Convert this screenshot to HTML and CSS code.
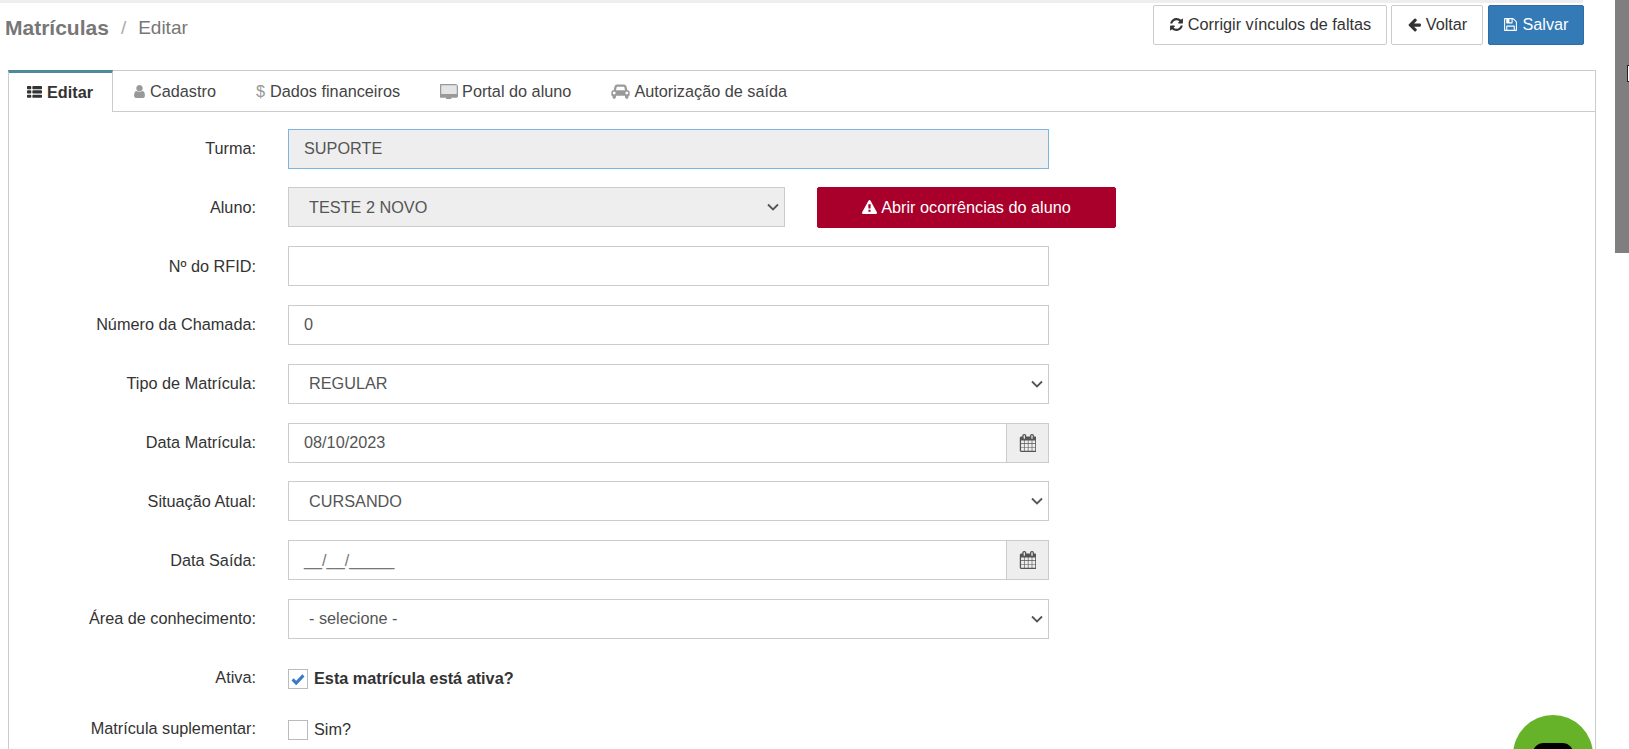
FILE: index.html
```html
<!DOCTYPE html>
<html lang="pt-BR">
<head>
<meta charset="utf-8">
<title>Matrículas / Editar</title>
<link rel="stylesheet" href="styles.css">
</head>
<body>
<svg class="defs" width="0" height="0" aria-hidden="true">
  <symbol id="i-cal" viewBox="0 0 1664 1792"><path d="M192 1664h288v-288h-288v288zm352 0h320v-288h-320v288zm-352-352h288v-320h-288v320zm352 0h320v-320h-320v320zm-352-384h288v-288h-288v288zm736 736h320v-288h-320v288zm-384-736h320v-288h-320v288zm768 736h288v-288h-288v288zm-384-352h320v-320h-320v320zm-352-864v-288q0-13-9.5-22.5t-22.5-9.5h-64q-13 0-22.5 9.5t-9.5 22.5v288q0 13 9.5 22.5t22.5 9.5h64q13 0 22.5-9.5t9.5-22.5zm736 864h288v-320h-288v320zm-384-384h320v-288h-320v288zm384 0h288v-288h-288v288zm32-480v-288q0-13-9.5-22.5t-22.5-9.5h-64q-13 0-22.5 9.5t-9.5 22.5v288q0 13 9.5 22.5t22.5 9.5h64q13 0 22.5-9.5t9.5-22.5zm384-64v1280q0 52-38 90t-90 38h-1408q-52 0-90-38t-38-90v-1280q0-52 38-90t90-38h128v-96q0-66 47-113t113-47h64q66 0 113 47t47 113v96h384v-96q0-66 47-113t113-47h64q66 0 113 47t47 113v96h128q52 0 90 38t38 90z"/></symbol>
</svg>

<div class="topstrip"></div>

<header class="pagehead">
  <h1 class="crumbs"><span class="crumb-main">Matrículas</span><span class="crumb-sep">/</span><span class="crumb-sub">Editar</span></h1>
  <div class="actions">
    <button class="btn btn-default btn-fix" type="button"><svg class="ic" viewBox="0 0 1792 1792"><path d="M1639 1056q0 5-1 7-64 268-268 434.5t-478 166.5q-146 0-282.5-55t-243.5-157l-129 129q-19 19-45 19t-45-19-19-45v-448q0-26 19-45t45-19h448q26 0 45 19t19 45-19 45l-137 137q71 66 161 102t187 36q134 0 250-65t186-179q11-17 53-117 8-23 30-23h192q13 0 22.5 9.5t9.5 22.5zm25-800v448q0 26-19 45t-45 19h-448q-26 0-45-19t-19-45 19-45l138-138q-148-137-349-137-134 0-250 65t-186 179q-11 17-53 117-8 23-30 23h-199q-13 0-22.5-9.5t-9.5-22.5v-7q65-268 270-434.5t480-166.5q146 0 284 55.5t245 156.5l130-129q19-19 45-19t45 19 19 45z"/></svg> Corrigir vínculos de faltas</button>
    <button class="btn btn-default btn-back" type="button"><svg class="ic" viewBox="0 0 1792 1792"><path d="M1664 896v128q0 53-32.5 90.5t-84.5 37.5h-704l293 294q38 36 38 90t-38 90l-75 76q-37 37-90 37-52 0-91-37l-651-652q-37-37-37-90 0-52 37-91l651-650q38-38 91-38 52 0 90 38l75 74q38 38 38 91t-38 91l-293 293h704q52 0 84.5 37.5t32.5 90.5z"/></svg> Voltar</button>
    <button class="btn btn-primary" type="button"><svg class="ic" viewBox="0 0 1792 1792"><path d="M512 1536h768v-384h-768v384zm896 0h128v-896q0-14-10-38.5t-20-34.5l-281-281q-10-10-34-20t-39-10v416q0 40-28 68t-68 28h-576q-40 0-68-28t-28-68v-416h-128v1280h128v-416q0-40 28-68t68-28h832q40 0 68 28t28 68v416zm-384-928v-320q0-13-9.5-22.5t-22.5-9.5h-192q-13 0-22.5 9.5t-9.5 22.5v320q0 13 9.5 22.5t22.5 9.5h192q13 0 22.5-9.5t9.5-22.5zm640 32v928q0 40-28 68t-68 28h-1344q-40 0-68-28t-28-68v-1344q0-40 28-68t68-28h928q40 0 88 20t76 48l280 280q28 28 48 76t20 88z"/></svg> Salvar</button>
  </div>
</header>

<main class="panel">
  <ul class="tabs">
    <li class="tab active"><svg class="ic" viewBox="0 0 1792 1792"><path d="M512 1248v192q0 40-28 68t-68 28h-320q-40 0-68-28t-28-68v-192q0-40 28-68t68-28h320q40 0 68 28t28 68zm0-512v192q0 40-28 68t-68 28h-320q-40 0-68-28t-28-68v-192q0-40 28-68t68-28h320q40 0 68 28t28 68zm1280 512v192q0 40-28 68t-68 28h-960q-40 0-68-28t-28-68v-192q0-40 28-68t68-28h960q40 0 68 28t28 68zm-1280-1024v192q0 40-28 68t-68 28h-320q-40 0-68-28t-28-68v-192q0-40 28-68t68-28h320q40 0 68 28t28 68zm1280 512v192q0 40-28 68t-68 28h-960q-40 0-68-28t-28-68v-192q0-40 28-68t68-28h960q40 0 68 28t28 68zm0-512v192q0 40-28 68t-68 28h-960q-40 0-68-28t-28-68v-192q0-40 28-68t68-28h960q40 0 68 28t28 68z"/></svg> Editar</li>
    <li class="tab"><svg class="ic ic-user" viewBox="256 128 1280 1536"><path d="M1536 1399q0 109-62.5 187t-150.5 78h-854q-88 0-150.5-78t-62.5-187q0-85 8.5-160.5t31.5-152 58.5-131 94-89 134.5-34.5q131 128 313 128t313-128q76 0 134.5 34.5t94 89 58.5 131 31.5 152 8.5 160.5zm-256-887q0 159-112.5 271.5t-271.5 112.5-271.5-112.5-112.5-271.5 112.5-271.5 271.5-112.5 271.5 112.5 112.5 271.5z"/></svg> Cadastro</li>
    <li class="tab"><span class="dollar">$</span> Dados financeiros</li>
    <li class="tab"><svg class="ic ic-desk" viewBox="0 0 1856 1536"><rect class="screen" x="100" y="100" width="1656" height="960"/><path d="M1728 992v-832q0-13-9.5-22.5t-22.5-9.5h-1536q-13 0-22.5 9.5t-9.5 22.5v832q0 13 9.5 22.5t22.5 9.5h1536q13 0 22.5-9.5t9.5-22.5zm128-832v1088q0 66-47 113t-113 47h-544q0 37 16 77.5t32 71 16 43.5q0 26-19 45t-45 19h-512q-26 0-45-19t-19-45q0-14 16-44t32-70 16-78h-544q-66 0-113-47t-47-113v-1088q0-66 47-113t113-47h1536q66 0 113 47t47 113z"/></svg> Portal do aluno</li>
    <li class="tab"><svg class="ic ic-car" viewBox="0 0 2048 1792"><path d="M480 1120q0-66-47-113t-113-47-113 47-47 113 47 113 113 47 113-47 47-113zm36-320h1016l-89-357q-2-8-14-17.5t-21-9.5h-768q-9 0-21 9.5t-14 17.5zm1372 320q0-66-47-113t-113-47-113 47-47 113 47 113 113 47 113-47 47-113zm160-96v384q0 14-9 23t-23 9h-96v128q0 80-56 136t-136 56-136-56-56-136v-128h-1024v128q0 80-56 136t-136 56-136-56-56-136v-128h-96q-14 0-23-9t-9-23v-384q0-93 65.5-158.5t158.5-65.5h28l105-419q23-94 104-157.5t179-63.5h768q98 0 179 63.5t104 157.5l105 419h28q93 0 158.5 65.5t65.5 158.5z"/></svg> Autorização de saída</li>
  </ul>

  <form class="form">
    <div class="row">
      <label class="lab">Turma:</label>
      <div class="ctl ctl-ro">SUPORTE</div>
    </div>
    <div class="row">
      <label class="lab">Aluno:</label>
      <div class="ctl ctl-sel ctl-ro-sel">TESTE 2 NOVO<svg class="chev" viewBox="0 0 12 8"><path d="M1 1.5l5 5 5-5" fill="none" stroke="#555" stroke-width="1.8"/></svg></div>
      <button class="btn btn-red" type="button"><svg class="ic" viewBox="0 0 1792 1792"><path d="M1024 1375v-190q0-14-9.5-23.5t-22.5-9.5h-192q-13 0-22.5 9.5t-9.5 23.5v190q0 14 9.5 23.5t22.5 9.5h192q13 0 22.5-9.5t9.5-23.5zm-2-374l18-459q0-12-10-19-13-11-24-11h-220q-11 0-24 11-10 7-10 21l17 457q0 10 10 16.5t24 6.5h185q14 0 23.5-6.5t10.5-16.5zm-14-934l768 1408q35 63-2 126-17 29-46.5 46t-63.5 17h-1536q-34 0-63.5-17t-46.5-46q-37-63-2-126l768-1408q17-31 47-49t65-18 65 18 47 49z"/></svg> Abrir ocorrências do aluno</button>
    </div>
    <div class="row">
      <label class="lab">Nº do RFID:</label>
      <div class="ctl"></div>
    </div>
    <div class="row">
      <label class="lab">Número da Chamada:</label>
      <div class="ctl">0</div>
    </div>
    <div class="row">
      <label class="lab">Tipo de Matrícula:</label>
      <div class="ctl ctl-sel">REGULAR<svg class="chev" viewBox="0 0 12 8"><path d="M1 1.5l5 5 5-5" fill="none" stroke="#555" stroke-width="1.8"/></svg></div>
    </div>
    <div class="row">
      <label class="lab">Data Matrícula:</label>
      <div class="group">
        <div class="ctl ctl-fill">08/10/2023</div>
        <div class="addon"><svg class="ic-cal"><use href="#i-cal"/></svg></div>
      </div>
    </div>
    <div class="row">
      <label class="lab">Situação Atual:</label>
      <div class="ctl ctl-sel">CURSANDO<svg class="chev" viewBox="0 0 12 8"><path d="M1 1.5l5 5 5-5" fill="none" stroke="#555" stroke-width="1.8"/></svg></div>
    </div>
    <div class="row">
      <label class="lab">Data Saída:</label>
      <div class="group">
        <div class="ctl ctl-fill ctl-mask">__/__/_____</div>
        <div class="addon"><svg class="ic-cal"><use href="#i-cal"/></svg></div>
      </div>
    </div>
    <div class="row">
      <label class="lab">Área de conhecimento:</label>
      <div class="ctl ctl-sel">- selecione -<svg class="chev" viewBox="0 0 12 8"><path d="M1 1.5l5 5 5-5" fill="none" stroke="#555" stroke-width="1.8"/></svg></div>
    </div>
    <div class="row row-check row-ativa">
      <label class="lab">Ativa:</label>
      <span class="box"><svg viewBox="0 0 20 20"><path d="M4 10.5l4 4 8-8.5" fill="none" stroke="#3a78c9" stroke-width="3.4"/></svg></span>
      <span class="check-text strong">Esta matrícula está ativa?</span>
    </div>
    <div class="row row-check">
      <label class="lab">Matrícula suplementar:</label>
      <span class="box"></span>
      <span class="check-text">Sim?</span>
    </div>
  </form>
</main>

<div class="scrollthumb"></div>
<div class="cursor"></div>
<div class="chat"><div class="chat-disc"><div class="chat-glyph"></div></div></div>
</body>
</html>
```
FILE: styles.css
```css
* { box-sizing: border-box; }
html, body { margin: 0; height: 749px; overflow: hidden; background: #fff; }
body { font-family: "Liberation Sans", Arial, sans-serif; font-size: 16.25px; color: #333; position: relative; }
.defs { position: absolute; }
.topstrip { height: 3px; width: 1583px; background: #eee; }
.pagehead { display: flex; justify-content: space-between; align-items: flex-start; height: 67px; padding: 2px 45px 0 5px; }
.crumbs { margin: 10px 0 0; font-weight: 400; font-size: 19px; line-height: 26px; display: flex; }
.crumb-main { font-size: 21px; font-weight: 700; color: #777; }
.crumb-sep { color: #aaa; margin: 0 12px; }
.crumb-sub { color: #777; }
.actions { display: flex; gap: 4px; }
.btn { font: inherit; height: 40px; border-radius: 2px; border: 1px solid #ccc; background: #fff; color: #333; padding: 0; display: flex; align-items: center; justify-content: center; gap: 4px; }
.actions .btn { padding-bottom: 2px; }
.btn-fix { width: 234px; }
.btn-back { width: 92px; }
.btn-primary { width: 96px; margin-left: 1px; background: #337ab7; border-color: #2e6da4; color: #fff; }
.ic { width: 15px; height: 15px; fill: currentColor; flex: none; }
.panel { margin-left: 8px; width: 1588px; border: 1px solid #ccc; border-bottom: 0; height: 679px; }
.tabs { list-style: none; margin: 0; padding: 0; display: flex; height: 41px; border-bottom: 1px solid #ccc; }
.tab { display: flex; align-items: center; gap: 4px; padding: 0 20px; color: #444; height: 40px; }
.tab .ic { fill: #999; }
.tab.active { width: 105px; padding: 0 0 0 18px; gap: 5px; margin-left: -1px; margin-top: -1px; height: 42px; background: #fff; color: #333; font-weight: 700; border-top: 3px solid #4d8a9a; border-right: 1px solid #ccc; border-left: 1px solid #ccc; }
.tab.active .ic { fill: #333; }
.dollar { color: #999; margin-right: 1px; }
.ic-user { width: 11px; height: 13px; margin: 0 1px; }
.ic-desk { width: 18px; height: 15px; }
.ic .screen { fill: #e4e4e4; }
.ic-car { width: 19px; height: 16px; }
.form { display: flex; flex-direction: column; gap: 18.8px; padding-top: 16.6px; }
.row { display: flex; align-items: center; height: 40px; }
.lab { width: 247px; text-align: right; margin-right: 32px; color: #333; flex: none; }
.ctl { width: 761px; height: 100%; border: 1px solid #ccc; padding: 0 15px; display: flex; align-items: center; color: #555; background: #fff; }
.ctl-ro { background: #eee; border-color: #7db4e0; }
.ctl-sel { position: relative; padding-left: 20px; }
.ctl-ro-sel { width: 497px; background: #eee; }
.chev { position: absolute; right: 5px; top: 50%; width: 12px; height: 8px; margin-top: -4px; }
.btn-red { width: 299px; height: 41px; margin-left: 32px; background: #a8002b; border-color: #a8002b; color: #fff; }
.group { display: flex; width: 761px; height: 100%; }
.ctl-fill { flex: 1; width: auto; }
.ctl-mask { color: #777; }
.addon { width: 42px; background: #eee; border: 1px solid #ccc; border-left: 0; display: flex; align-items: center; justify-content: center; }
.ic-cal { width: 17px; height: 18px; fill: #555; }
.row-check { height: 20px; gap: 0; }
.row-check .lab { margin-top: -2px; }
.row-ativa { margin-top: 11px; margin-bottom: 12px; }
.box { width: 20px; height: 20px; border: 1px solid #bbb; margin-right: 6px; flex: none; display: block; }
.box svg { display: block; width: 18px; height: 18px; }
.strong { font-weight: 700; }
.check-text { color: #333; }
.scrollthumb { position: absolute; left: 1615px; top: 0; width: 14px; height: 253px; background: #7f7f7f; }
.cursor { position: absolute; left: 1627px; top: 65px; width: 2px; height: 17px; border: 1px solid #222; border-right: 0; background: #fff; }
.chat { position: absolute; left: 1513px; top: 715px; width: 80px; height: 34px; overflow: hidden; }
.chat-disc { width: 80px; height: 80px; padding-top: 28px; border-radius: 50%; background: #66b32a; }
.chat-glyph { margin: 0 auto; width: 40px; height: 30px; background: #000; border-radius: 10px; }
```
